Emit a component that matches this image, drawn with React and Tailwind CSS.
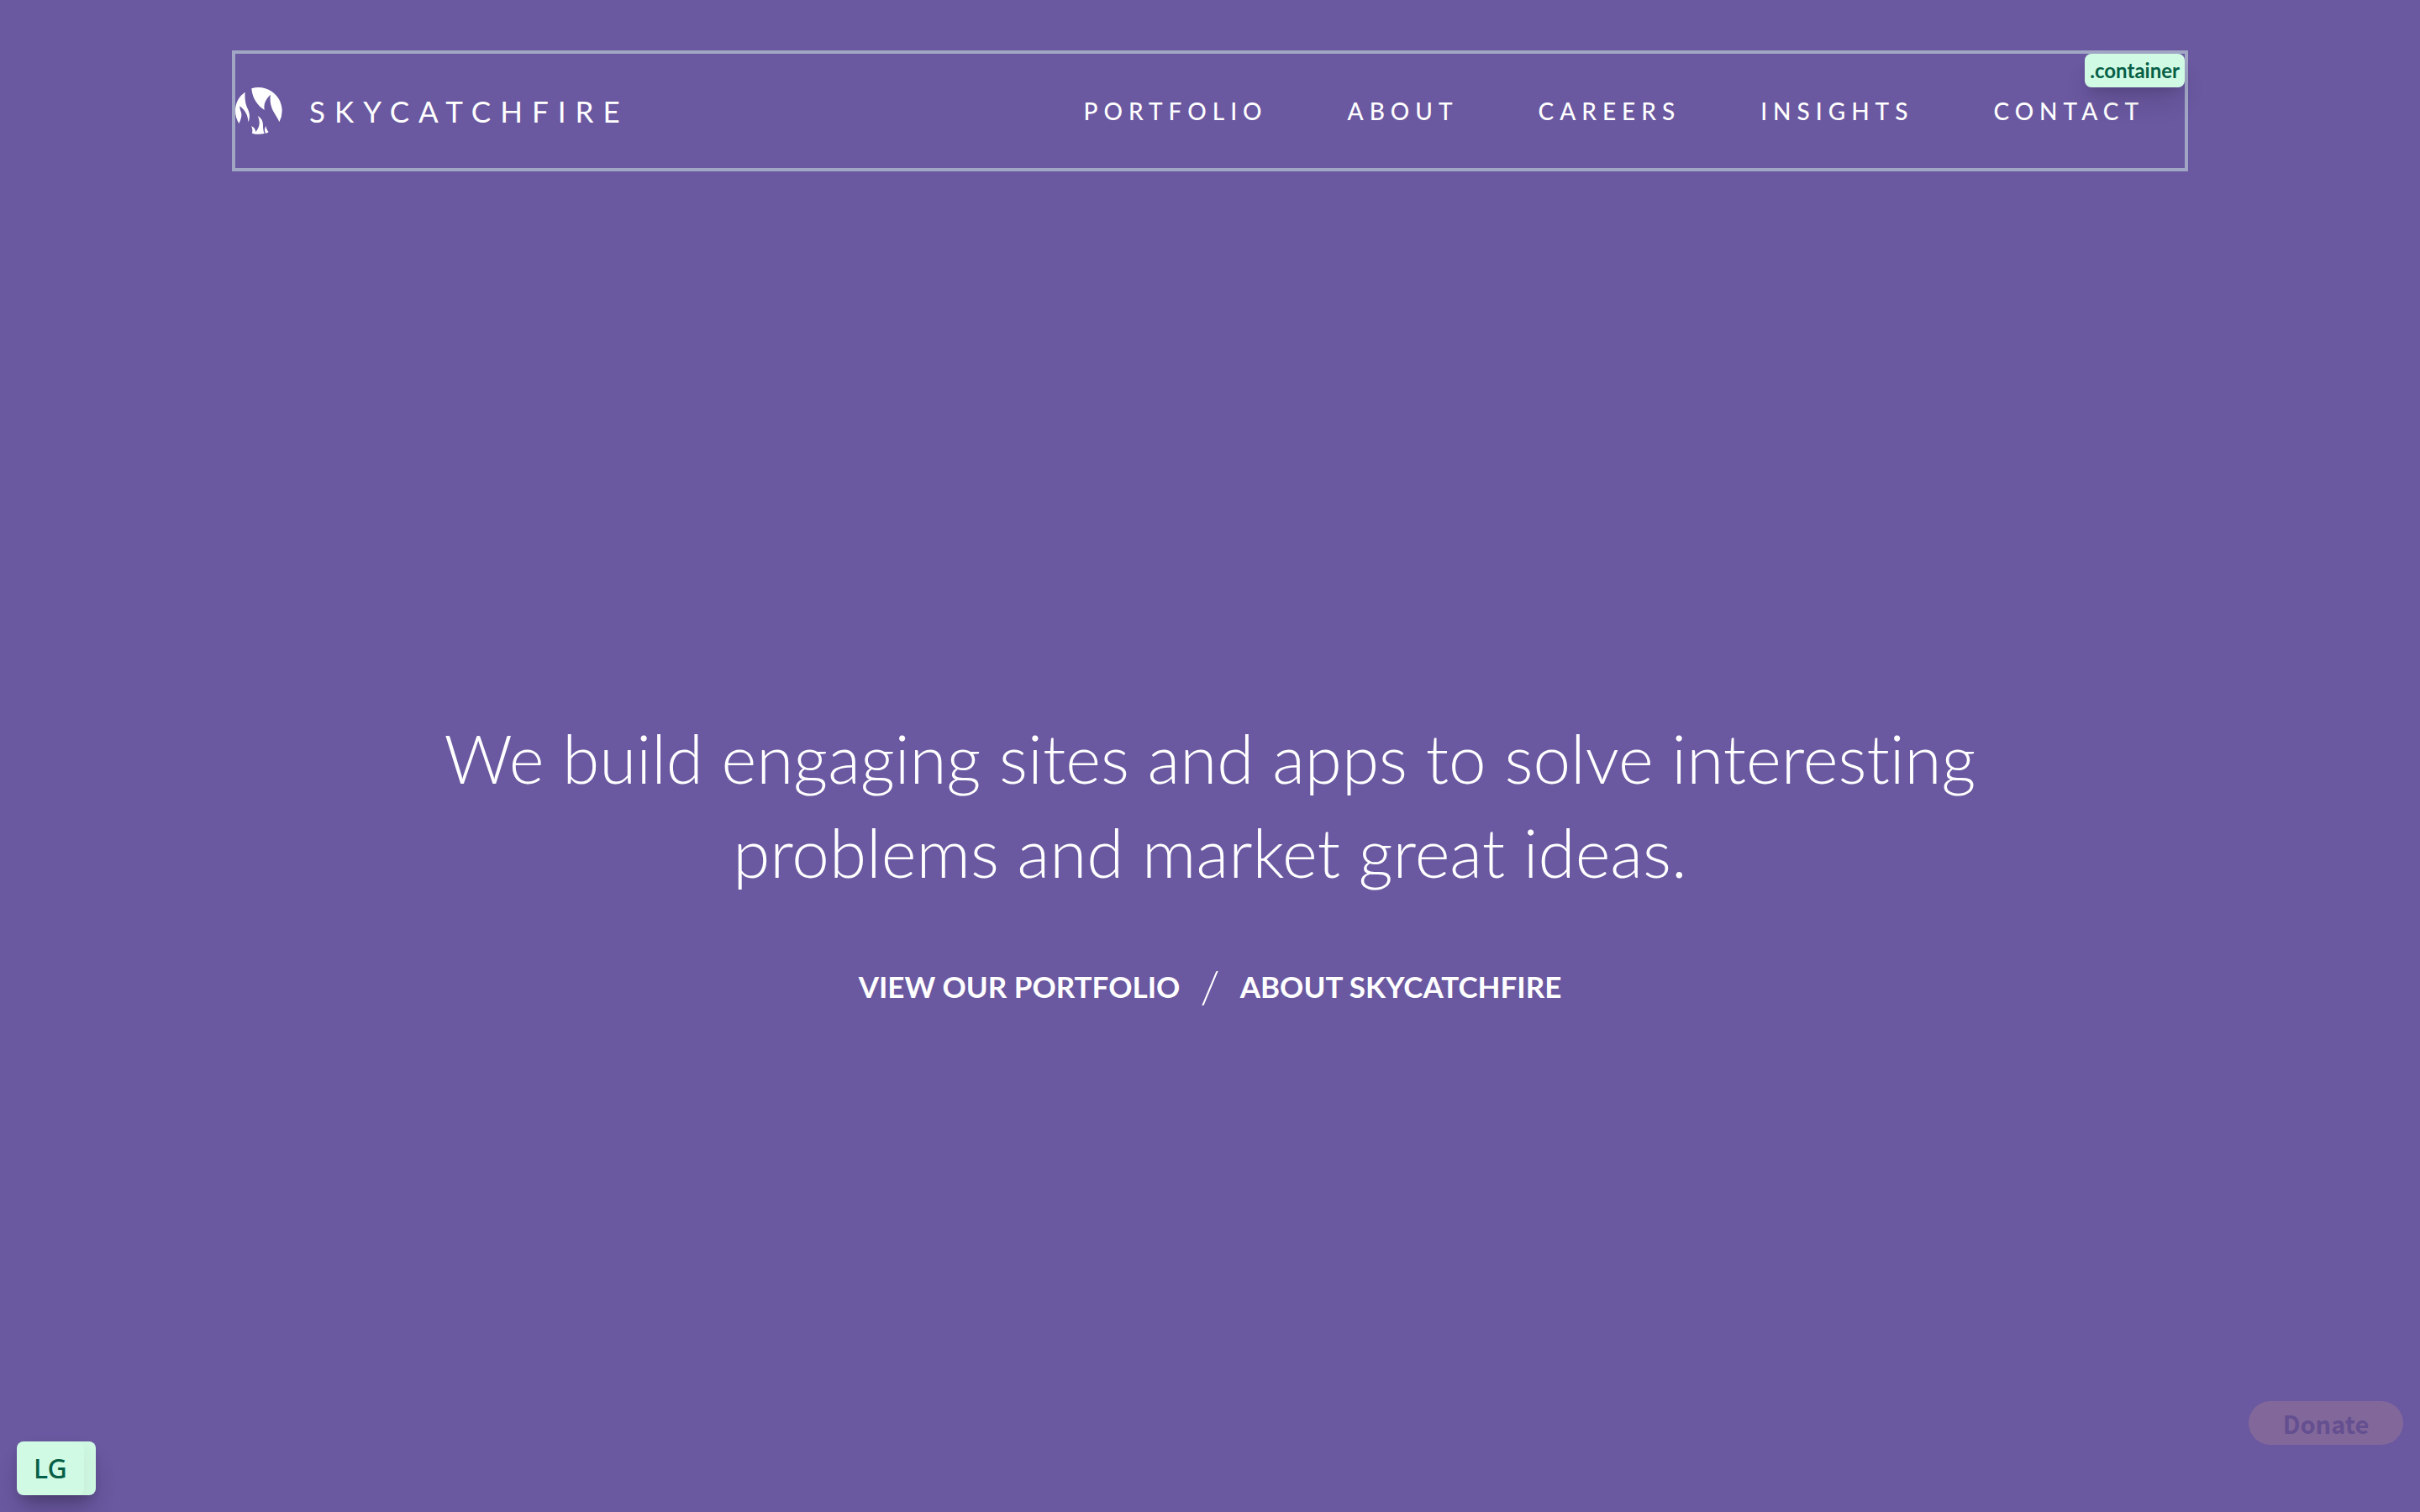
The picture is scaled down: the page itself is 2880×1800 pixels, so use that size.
const navItems = ["Portfolio", "About", "Careers", "Insights", "Contact"];

function FlameMark() {
  return (
    <svg viewBox="0 0 168 168" className="size-14 shrink-0 fill-white" aria-hidden="true">
      <path d="M35 17C14 31 0 55 0 84c0 17 5 32 13 45 7-13 10-24 9-35-1-9-7-15-6-27 18 14 30 32 30 57 7-13 6-30 0-44C38 62 33 48 35 17Z" />
      <path d="M58 4a84 84 0 0 1 99 120c-6-17-18-29-26-49-6-16-8-33-5-49-18 17-25 33-22 55C83 68 61 43 58 4Z" />
      <path d="M80 102c14 8 19 19 19 35 0 11 2 21 5 28a84 84 0 0 1-44-1c2-10 1-19-3-26 10 4 15 11 16 21 9-12 14-22 13-35-1-9-2-15-6-22Z" />
      <path d="M109 138c2 9 5 16 10 22l-11 5c-4-10-4-18 1-27Z" />
    </svg>
  );
}

export default function App() {
  return (
    <div className="relative flex min-h-screen flex-col bg-[#6a58a0] pt-[60px] font-['Lato',sans-serif] text-white">
      <header className="relative mx-auto flex h-36 w-full max-w-[2328px] items-center justify-between border-4 border-[#a0a6c4] pr-12">
        <a href="#home" className="flex items-center gap-8">
          <FlameMark />
          <span className="text-[35px] leading-none font-normal tracking-[11px]">SKYCATCHFIRE</span>
        </a>
        <nav className="flex gap-[95px]">
          {navItems.map((item) => (
            <a key={item} href={`#${item.toLowerCase()}`} className="text-[28px] leading-10 font-medium tracking-[7px] uppercase">
              {item}
            </a>
          ))}
        </nav>
        <span className="absolute top-0 right-0 rounded-lg bg-[#d1fae5] px-1.5 text-[24px] leading-10 font-bold text-[#065f46] shadow-[0_20px_30px_-6px_rgba(0,0,0,0.15),0_8px_12px_-4px_rgba(0,0,0,0.1)]">
          .container
        </span>
      </header>

      <main className="flex flex-1 flex-col items-center justify-center gap-[76px] pt-11 text-center">
        <h1 className="max-w-[2000px] text-[80px] leading-[112px] font-light [font-variant-ligatures:none]">
          We build engaging sites and apps to solve interesting
          <br />
          problems and market great ideas.
        </h1>
        <div className="flex items-center gap-6 text-[35px] leading-[56px] font-bold">
          <a href="#portfolio">VIEW OUR PORTFOLIO</a>
          <span className="text-[54px] font-light">/</span>
          <a href="#about">ABOUT SKYCATCHFIRE</a>
        </div>
      </main>

      <div className="absolute bottom-5 left-5 flex rounded-lg bg-[#d1fae5] pr-3.5 font-['Noto_Sans',sans-serif] text-[32px] leading-[64px] font-medium text-[#065f46] shadow-[0_20px_30px_-6px_rgba(0,0,0,0.2),0_8px_12px_-4px_rgba(0,0,0,0.12)]">
        <span className="w-20 rounded-lg pl-5 shadow-[6px_6px_20px_rgba(0,0,0,0.05)]">LG</span>
      </div>
      <button className="absolute right-5 bottom-20 h-[52px] w-46 rounded-full bg-[#82689a] font-['Noto_Sans_CJK_SC',sans-serif] text-[29px] leading-[52px] font-bold text-[#644f90]">
        Donate
      </button>
    </div>
  );
}
